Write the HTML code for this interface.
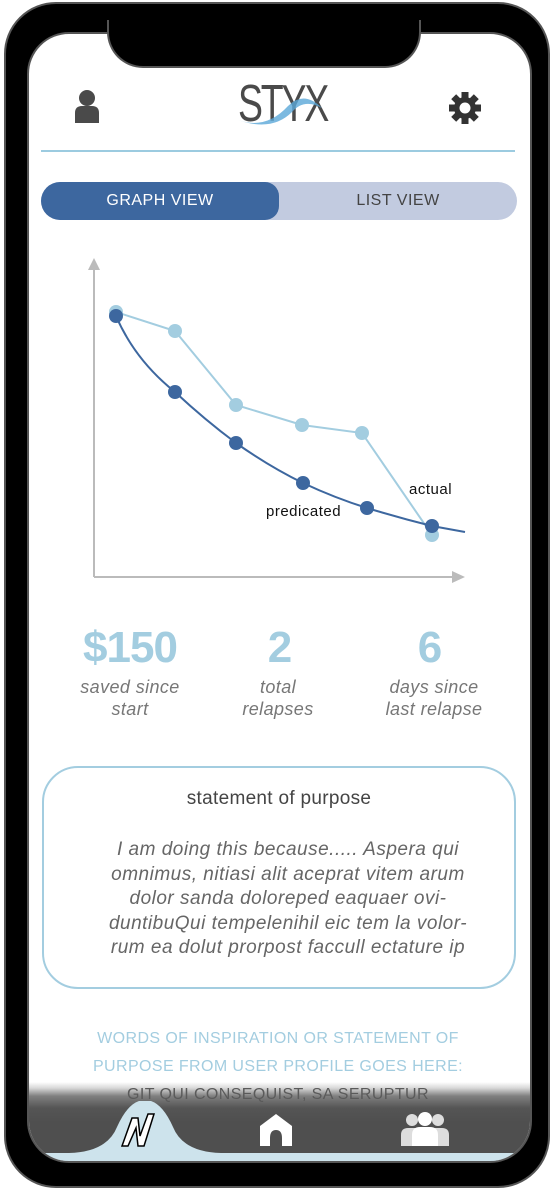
<!DOCTYPE html>
<html><head><meta charset="utf-8"><style>
body{margin:0;width:556px;height:1192px;background:#fff;position:relative;overflow:hidden;font-family:"Liberation Sans",sans-serif;}
.frame{position:absolute;left:4px;top:2px;width:546px;height:1186px;background:#000;border-radius:52px;border:2px solid #555;box-sizing:border-box;}
.screen{position:absolute;left:27px;top:32px;width:505px;height:1131px;background:#fff;border-radius:42px;border:2px solid #555;box-sizing:border-box;overflow:hidden;}
.notch{position:absolute;left:107px;top:20px;width:314px;height:48px;background:#000;border:2px solid #555;border-top:none;border-radius:0 0 36px 36px;box-sizing:border-box;}
.abs{position:absolute;}
.t{position:absolute;text-align:center;}
</style></head><body>
<div class="frame"></div>
<div class="screen">
 <div class="abs" style="left:12px;top:116px;width:474px;height:2px;background:#9ccbe0"></div>
 <div class="abs" style="left:12px;top:148px;width:476px;height:38px;border-radius:19px;background:#c2cbe0"></div>
 <div class="abs" style="left:12px;top:148px;width:238px;height:38px;border-radius:19px 14px 14px 19px;background:#3d679f"></div>
 <div class="t" style="left:12px;top:158px;width:238px;color:#fff;font-size:16px;letter-spacing:.5px">GRAPH VIEW</div>
 <div class="t" style="left:250px;top:158px;width:238px;color:#444;font-size:16px;letter-spacing:.5px">LIST VIEW</div>
</div>
<div class="notch"></div>
<svg class="abs" style="left:72px;top:88px" width="30" height="36" viewBox="0 0 30 36"><circle cx="15" cy="10" r="8" fill="#4a4a4a"/><path d="M3 35V25Q3 18 10 18H20Q27 18 27 25V35Z" fill="#4a4a4a"/></svg>
<svg class="abs" style="left:448px;top:91px" width="34" height="34" viewBox="-17 -17 34 34"><g fill="#333"><circle r="11"/><rect x="-3.5" y="-16" width="7" height="32"/><rect x="-16" y="-3.5" width="32" height="7"/><rect x="-3.5" y="-16" width="7" height="32" transform="rotate(45)"/><rect x="-3.5" y="-16" width="7" height="32" transform="rotate(-45)"/></g><circle r="5.5" fill="#fff"/></svg>
<div class="abs" style="left:238px;top:78px;font-family:'Liberation Sans Narrow','Liberation Sans',sans-serif;font-size:52px;line-height:52px;color:#4a4a4a;letter-spacing:-3px;transform:scaleX(.72);transform-origin:left">STYX</div>
<svg class="abs" style="left:226px;top:84px" width="100" height="46"><path d="M12 36Q40 46 62 22Q78 6 96 24Q78 14 66 28Q46 48 12 36Z" fill="#5aa8d8" opacity=".8"/></svg>
<svg class="abs" style="left:0;top:0" width="556" height="600">
<g stroke="#bbb" stroke-width="2" fill="#bbb"><line x1="94" y1="268" x2="94" y2="577"/><line x1="94" y1="577" x2="456" y2="577"/><path d="M88 270L94 258L100 270Z" stroke="none"/><path d="M452 571L465 577L452 583Z" stroke="none"/></g>
<polyline points="116,312 175,331 236,405 302,425 362,433 432,535" fill="none" stroke="#a3cde0" stroke-width="2"/>
<g fill="#a3cde0"><circle cx="116" cy="312" r="7"/><circle cx="175" cy="331" r="7"/><circle cx="236" cy="405" r="7"/><circle cx="302" cy="425" r="7"/><circle cx="362" cy="433" r="7"/><circle cx="432" cy="535" r="7"/></g>
<path d="M116 316Q135 360 175 392Q205 420 236 443Q270 467 303 483Q335 498 367 508Q400 518 432 526L465 532" fill="none" stroke="#3d679f" stroke-width="2"/>
<g fill="#3d679f"><circle cx="116" cy="316" r="7"/><circle cx="175" cy="392" r="7"/><circle cx="236" cy="443" r="7"/><circle cx="303" cy="483" r="7"/><circle cx="367" cy="508" r="7"/><circle cx="432" cy="526" r="7"/></g>
<text x="409" y="494" font-size="15" fill="#111" font-family="Liberation Sans" letter-spacing="0.5">actual</text>
<text x="266" y="516" font-size="15" fill="#111" font-family="Liberation Sans" letter-spacing="0.5">predicated</text>
</svg>
<div class="t" style="left:55px;top:624px;width:150px;font-size:44px;line-height:48px;font-weight:bold;color:#a3cde0;letter-spacing:-1px">$150</div>
<div class="t" style="left:210px;top:624px;width:140px;font-size:44px;line-height:48px;font-weight:bold;color:#a3cde0">2</div>
<div class="t" style="left:360px;top:624px;width:140px;font-size:44px;line-height:48px;font-weight:bold;color:#a3cde0">6</div>
<div class="t" style="left:50px;top:676px;width:160px;font-size:18px;font-style:italic;color:#777;line-height:22px;letter-spacing:.4px">saved since<br>start</div>
<div class="t" style="left:198px;top:676px;width:160px;font-size:18px;font-style:italic;color:#777;line-height:22px;letter-spacing:.4px">total<br>relapses</div>
<div class="t" style="left:352px;top:676px;width:164px;font-size:18px;font-style:italic;color:#777;line-height:22px;letter-spacing:.4px">days since<br>last relapse</div>
<div class="abs" style="left:42px;top:766px;width:474px;height:223px;border:2px solid #a3cde0;border-radius:36px;box-sizing:border-box"></div>
<div class="t" style="left:42px;top:788px;width:474px;font-size:19px;color:#444;letter-spacing:.3px">statement of purpose</div>
<div class="t" style="left:76px;top:838px;width:424px;font-size:19px;font-style:italic;color:#666;line-height:24.5px;letter-spacing:.5px">I am doing this because..... Aspera qui<br>omnimus, nitiasi alit aceprat vitem arum<br>dolor sanda doloreped eaquaer ovi-<br>duntibuQui tempelenihil eic tem la volor-<br>rum ea dolut prorpost faccull ectature ip</div>
<div class="abs" style="left:29px;top:1082px;width:501px;height:79px;border-radius:0 0 40px 40px;overflow:hidden;background:linear-gradient(#fff0 0px,#d8d8d8 6px,#808080 14px,#555 26px,#4f4f4f 40px)"></div>
<div class="t" style="left:40px;top:1025px;width:476px;font-size:16px;color:#a3cde0;line-height:28px;letter-spacing:.4px">WORDS OF INSPIRATION OR STATEMENT OF<br>PURPOSE FROM USER PROFILE GOES HERE:<br><span style="color:#5a5a5a">GIT QUI CONSEQUIST, SA SERUPTUR</span></div>
<div class="abs" style="left:29px;top:1101px;width:501px;height:60px;border-radius:0 0 40px 40px;overflow:hidden">
 <svg class="abs" style="left:0;top:0" width="501" height="60"><path d="M40 52Q78 51 88 26Q100 -1 116 -1Q132 -1 144 26Q154 51 192 52L501 52V60H0V52Z" fill="#cde3ec"/></svg>
</div>
<svg class="abs" style="left:118px;top:1112px" width="40" height="36"><path d="M4 34L14 6H20L22 24L30 2H36L26 34H20L18 16L10 34Z" fill="#fff" stroke="#000" stroke-width="1.5"/></svg>
<svg class="abs" style="left:258px;top:1112px" width="36" height="34"><path d="M2 14L18 2L34 14V34H24V26Q24 18 18 18Q12 18 12 26V34H2Z" fill="#fff"/></svg>
<svg class="abs" style="left:400px;top:1112px" width="50" height="34"><g fill="#ddd"><circle cx="12" cy="8" r="6"/><path d="M1 34V23Q1 16 8 16H16Q22 16 22 23V34Z"/><circle cx="38" cy="8" r="6"/><path d="M28 34V23Q28 16 34 16H42Q49 16 49 23V34Z"/></g><g fill="#fff"><circle cx="25" cy="7" r="7"/><path d="M12 34V23Q12 15 20 15H30Q38 15 38 23V34Z"/></g></svg>
</body></html>
